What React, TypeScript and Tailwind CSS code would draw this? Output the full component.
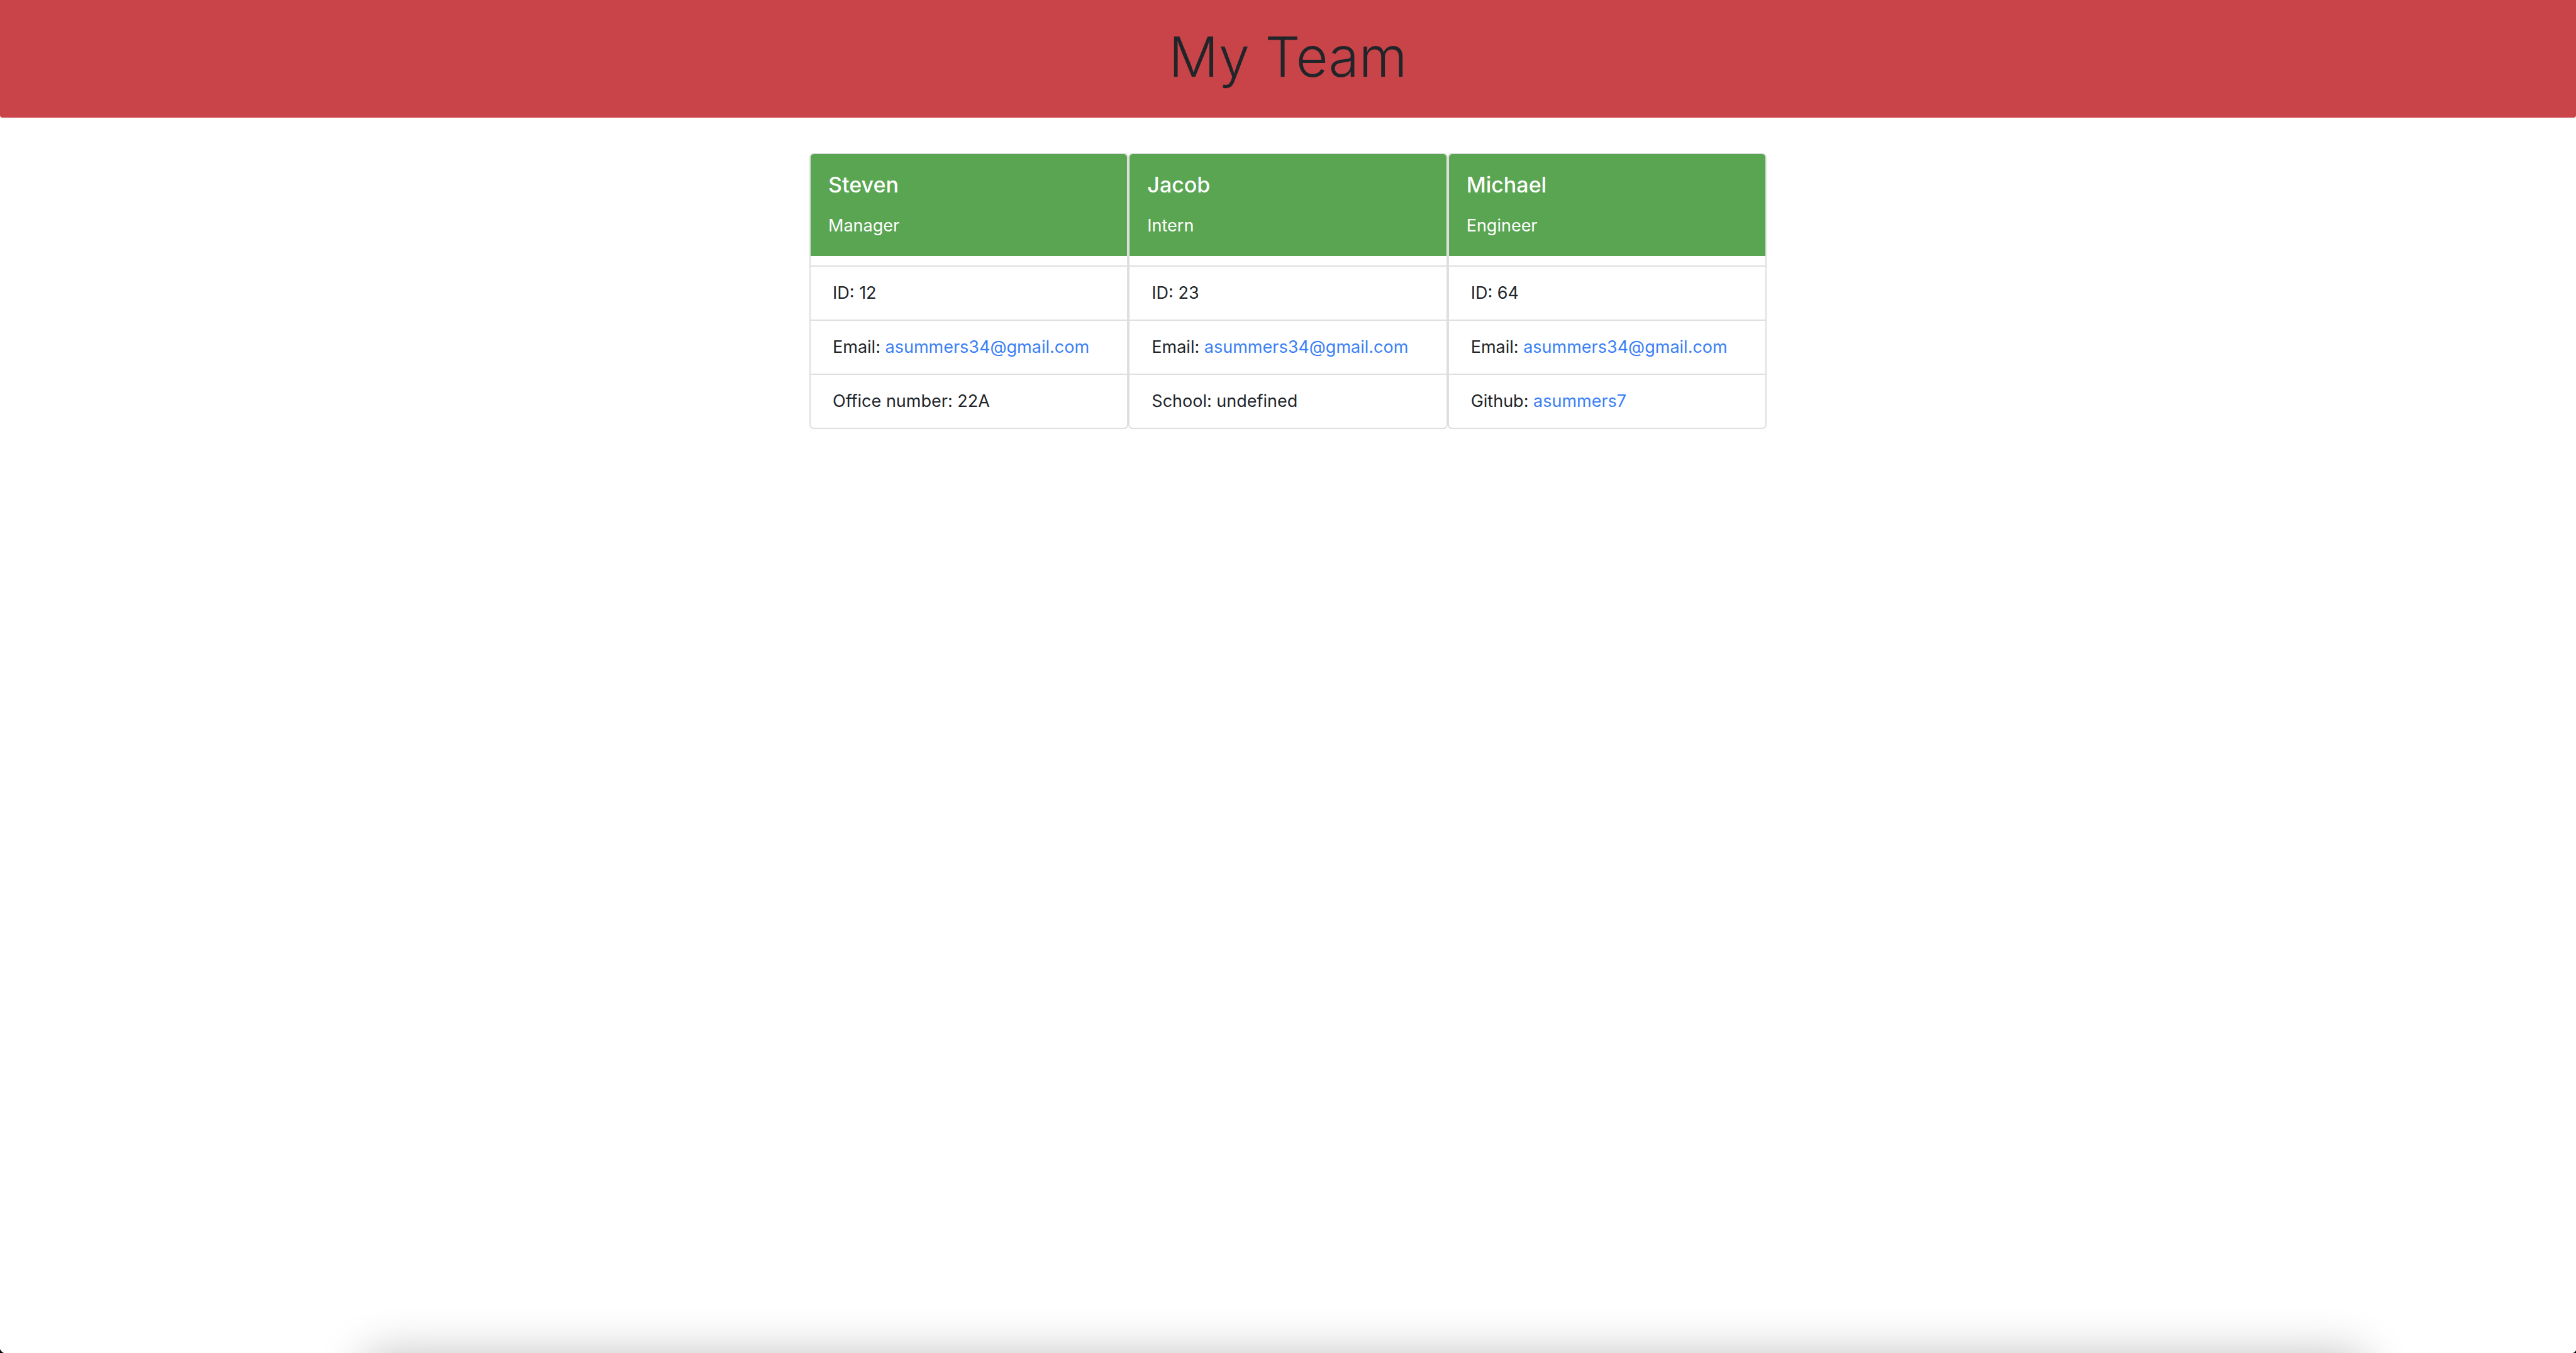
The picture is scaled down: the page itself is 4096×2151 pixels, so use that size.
type Field = { label: string; value: string; href?: string };
type Member = { name: string; role: string; fields: Field[] };

const email: Field = {
  label: "Email",
  value: "asummers34@gmail.com",
  href: "mailto:asummers34@gmail.com",
};

const team: Member[] = [
  {
    name: "Steven",
    role: "Manager",
    fields: [{ label: "ID", value: "12" }, email, { label: "Office number", value: "22A" }],
  },
  {
    name: "Jacob",
    role: "Intern",
    fields: [{ label: "ID", value: "23" }, email, { label: "School", value: "undefined" }],
  },
  {
    name: "Michael",
    role: "Engineer",
    fields: [
      { label: "ID", value: "64" },
      email,
      { label: "Github", value: "asummers7", href: "https://github.com/asummers7" },
    ],
  },
];

function MemberCard({ member }: { member: Member }) {
  return (
    <article className="overflow-hidden rounded-[7px] border-2 border-[#dfdfdf] bg-white">
      <header className="mb-[15px] bg-[#5aa552] px-7 pt-7 pb-[27px] text-white">
        <h2 className="mb-[23px] text-[34px] leading-[42px] font-medium">{member.name}</h2>
        <p>{member.role}</p>
      </header>
      <ul>
        {member.fields.map((field) => (
          <li key={field.label} className="border-t-2 border-[#dfdfdf] px-[35px] py-[21px]">
            {field.label}:{" "}
            {field.href ? (
              <a href={field.href} className="text-[#3a7ff6]">
                {field.value}
              </a>
            ) : (
              field.value
            )}
          </li>
        ))}
      </ul>
    </article>
  );
}

export default function App() {
  return (
    <div className="relative min-h-screen overflow-hidden bg-white font-['Inter',sans-serif] text-[27px] leading-[42px] text-[#212529]">
      <header className="mb-14 rounded-b-[4px] bg-[#c84449] px-7 pt-[31px] pb-[38px] text-center">
        <h1 className="text-[88px] leading-[118px] font-light">My Team</h1>
      </header>
      <main className="mx-auto grid max-w-[1522px] grid-cols-3">
        {team.map((member) => (
          <MemberCard key={member.name} member={member} />
        ))}
      </main>

      {/* Soft shadow rising from below the window's bottom edge */}
      <div className="absolute top-full right-[8%] left-[14%] h-40 rounded-[40px] shadow-[0_0_72px_rgba(0,0,0,0.24)]" />
      {/* Dark window corners */}
      <svg className="absolute bottom-0 left-0 size-1.5" viewBox="0 0 6 6" aria-hidden="true">
        <path d="M0 0Q2 4 6 6H0Z" fill="#05080c" />
      </svg>
      <svg className="absolute right-0 bottom-0 size-1.5" viewBox="0 0 6 6" aria-hidden="true">
        <path d="M6 2Q4 5 1 6H6Z" fill="#05080c" />
      </svg>
    </div>
  );
}
